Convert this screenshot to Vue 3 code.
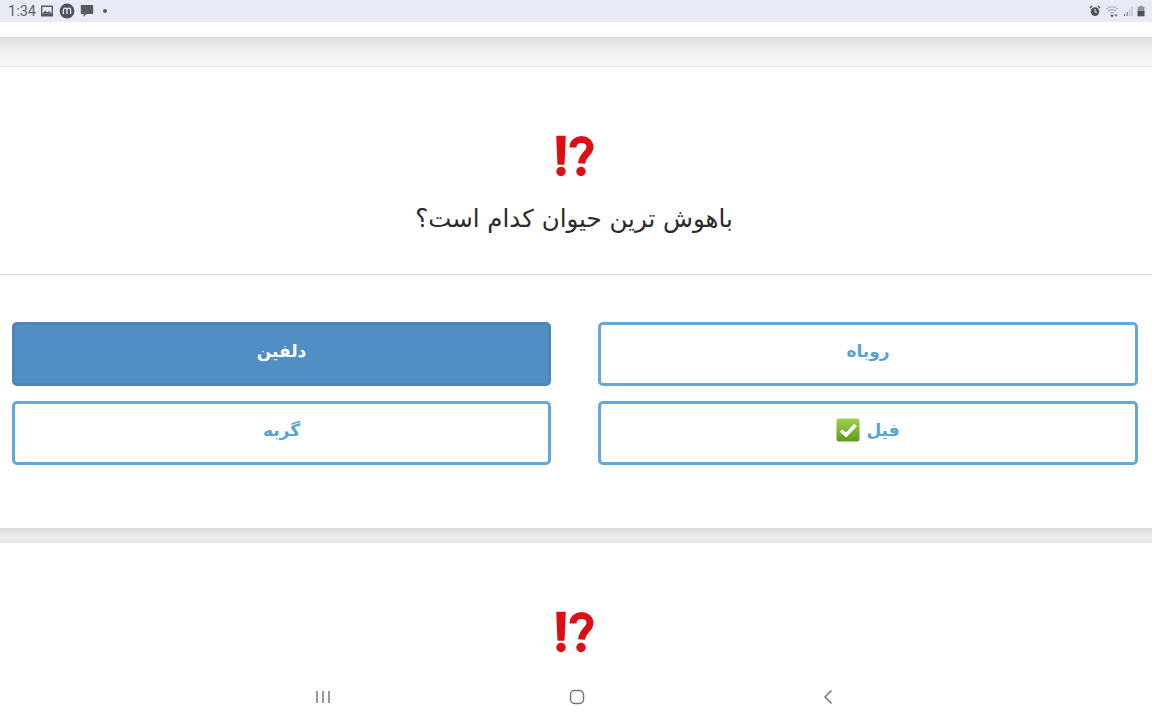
<script setup>
const answers = [
  { id: 1, label: 'روباه' },
  { id: 2, label: 'دلفین', selected: true },
  { id: 3, label: 'فیل', correct: true },
  { id: 4, label: 'گربه' }
]
</script>

<template>
  <div class="screen">
    <header class="status-bar">
      <div class="status-left">
        <span class="clock">1:34</span>
        <svg class="ico" width="14" height="14" viewBox="0 0 14 14">
          <path d="M1 1.5h12v11H1z" fill="#555a63" />
          <path d="M2.4 3h9.2v6.4H2.4z" fill="#e8ebf6" />
          <path d="M2.4 9.6l3-3.2 2 2 1.8-1.5 2.4 2.7z" fill="#555a63" />
        </svg>
        <svg class="ico" width="16" height="16" viewBox="0 0 16 16">
          <circle cx="8" cy="8" r="7.4" fill="#4f535b" />
          <path d="M4.4 11V6.9a1.7 1.7 0 0 1 3.6 0V11M8 6.9a1.7 1.7 0 0 1 3.6 0V11" fill="none" stroke="#e8ebf6" stroke-width="1.3" />
        </svg>
        <svg class="ico" width="14" height="14" viewBox="0 0 14 14">
          <path d="M.8 1h12.4v9H6.4L3.6 13v-3H.8z" fill="#555a63" />
        </svg>
        <span class="dot"></span>
      </div>
      <div class="status-right">
        <svg width="12" height="12" viewBox="0 0 12 12">
          <circle cx="6" cy="6.6" r="4.3" fill="#4f535b" />
          <path d="M1 3l2-2M11 3L9 1" stroke="#4f535b" stroke-width="1.4" />
          <path d="M6 4v3h2" stroke="#e8ebf6" fill="none" />
        </svg>
        <svg width="14" height="12" viewBox="0 0 14 12">
          <path d="M1 4.2a8.4 8.4 0 0 1 12 0M3 6.2a5.6 5.6 0 0 1 8 0M5 8.2a2.8 2.8 0 0 1 4 0" fill="none" stroke="#a4a8b0" stroke-width="1.1" />
          <path d="M6.2 10h1.6v1.4H6.2zM9.5 10.2h3M11 9v2.6" stroke="#5c6068" stroke-width=".8" />
        </svg>
        <svg width="10" height="12" viewBox="0 0 10 12">
          <path d="M1 9h1v2H1zM3.6 7h1v4h-1z" fill="#5c6068" />
          <path d="M6.2 4.500h1V11h-1zM8.600 2h1v9h-1z" fill="#b5b8bf" />
        </svg>
        <svg width="8" height="12" viewBox="0 0 8 12">
          <path d="M2.600 .8h2.800v1H7.400v9.400H.6V1.800h2z" fill="#8f939b" />
          <path d="M.6 6h6.800v5.200H.6z" fill="#4f535b" />
        </svg>
      </div>
    </header>

    <main class="feed">
      <div class="top-gap"></div>
      <div class="band first"></div>

      <section class="card" dir="rtl">
        <div class="question">
          <svg class="mark" width="42" height="44" viewBox="1.500 0 42 44">
            <path d="M3.500 1.500h8l-1.200 27.500H4.700z" fill="#dd0f14" stroke="#dd0f14" stroke-width="1.500" stroke-linejoin="round" />
            <circle cx="7.500" cy="36.500" r="4.700" fill="#dd0f14" />
            <path d="M19.500 12.500c0-5 4-8 8.500-8s8.500 3 8.500 7.500c0 6.500-7.800 7.500-8.500 16.500" fill="none" stroke="#dd0f14" stroke-width="7" />
            <circle cx="27.500" cy="36.500" r="4.700" fill="#dd0f14" />
          </svg>
          <h2 class="title">باهوش ترین حیوان کدام است؟</h2>
        </div>

        <div class="answers">
          <button
            v-for="a in answers"
            :key="a.id"
            class="answer"
            :class="{ selected: a.selected }"
            type="button"
          >
            <span>{{ a.label }}</span>
            <svg v-if="a.correct" class="check" width="24" height="24" viewBox="0 0 24 24">
              <defs>
                <linearGradient id="checkfill" x1="0" y1="0" x2="0" y2="1">
                  <stop offset="0" stop-color="#a5cf4e" />
                  <stop offset="1" stop-color="#5c9a1f" />
                </linearGradient>
              </defs>
              <rect x="0.500" y="0.500" width="23" height="23" rx="2.500" fill="url(#checkfill)" />
              <path d="M5 12.500l5 4.500 9.500-10" fill="none" stroke="#fff" stroke-width="3.600" />
            </svg>
          </button>
        </div>
      </section>

      <div class="band"></div>

      <section class="card next">
        <svg class="mark" width="42" height="44" viewBox="1.500 0 42 44">
          <path d="M3.500 1.500h8l-1.200 27.500H4.700z" fill="#dd0f14" stroke="#dd0f14" stroke-width="1.500" stroke-linejoin="round" />
          <circle cx="7.500" cy="36.500" r="4.700" fill="#dd0f14" />
          <path d="M19.500 12.500c0-5 4-8 8.500-8s8.500 3 8.500 7.500c0 6.500-7.800 7.500-8.500 16.500" fill="none" stroke="#dd0f14" stroke-width="7" />
          <circle cx="27.500" cy="36.500" r="4.700" fill="#dd0f14" />
        </svg>
      </section>
    </main>

    <nav class="nav-bar">
      <svg width="16" height="14" viewBox="0 0 16 14">
        <path d="M2 1v12M8 1v12M14 1v12" stroke="#777" stroke-width="1.500" />
      </svg>
      <svg width="16" height="16" viewBox="0 0 16 16">
        <rect x="1.500" y="1.500" width="13" height="13" rx="4" fill="none" stroke="#777" stroke-width="1.500" />
      </svg>
      <svg width="12" height="16" viewBox="0 0 12 16">
        <path d="M9.500 1.500L3 8l6.500 6.500" fill="none" stroke="#777" stroke-width="1.500" />
      </svg>
    </nav>
  </div>
</template>

<style>
body {
  background: #fff;
}
</style>

<style scoped>
.screen {
  width: 1152px;
  height: 720px;
  overflow: hidden;
  position: relative;
  background: #fff;
  font-family: "DejaVu Sans", "Noto Sans", sans-serif;
}
.status-bar {
  height: 22px;
  background: #e8ebf6;
  display: flex;
  justify-content: space-between;
  align-items: center;
  padding: 0 7px 0 8px;
}
.status-left {
  display: flex;
  align-items: center;
  gap: 5px;
}
.status-right {
  display: flex;
  align-items: center;
  gap: 4px;
}
.clock {
  font-family: Roboto, "Liberation Sans", sans-serif;
  font-size: 14.500px;
  color: #5c6068;
  margin-right: -1px;
}
.dot {
  width: 4px;
  height: 4px;
  border-radius: 50%;
  background: #555a63;
  margin-left: 4px;
}
.top-gap {
  height: 15px;
  background: #fff;
}
.band {
  height: 15px;
  background: linear-gradient(#dcdcdc, #ececec 50%, #e6e6e6);
  border-top: 1px solid #d9d9d9;
  box-sizing: border-box;
}
.band.first {
  height: 30px;
  background: linear-gradient(#dedede, #f0f0f0 40%, #f6f6f6);
  border-bottom: 1px solid #e4e4e4;
}
.card {
  background: #fff;
  height: 461px;
  box-sizing: border-box;
}
.question {
  height: 208px;
  box-sizing: border-box;
  border-bottom: 1px solid #ddd;
  padding-top: 68px;
  display: flex;
  flex-direction: column;
  align-items: center;
}
.mark {
  display: block;
  flex: none;
}
.title {
  margin: 24px 0 0;
  padding-right: 4px;
  font-size: 24.500px;
  line-height: 32px;
  font-weight: 400;
  color: #2b2b2b;
}
.answers {
  display: grid;
  grid-template-columns: 540px 539px;
  justify-content: space-between;
  grid-auto-rows: 64px;
  row-gap: 15px;
  padding: 47px 14px 0 12px;
}
.answer {
  display: flex;
  align-items: center;
  justify-content: center;
  gap: 6px;
  padding: 0 0 6px;
  background: #fff;
  border: 3px solid #62a8d8;
  border-radius: 5px;
  color: #58a3d6;
  font-family: inherit;
  font-size: 17px;
  font-weight: 700;
}
.answer.selected {
  background: #508ec4;
  border-color: #4d86b8;
  color: #fff;
}
.check {
  width: 24px;
  height: 24px;
}
.next {
  display: flex;
  justify-content: center;
  padding-top: 68px;
}
.nav-bar {
  position: absolute;
  left: 0;
  right: 0;
  bottom: 0;
  height: 46px;
  padding-left: 315px;
  padding-right: 318px;
  box-sizing: border-box;
  display: flex;
  align-items: center;
  justify-content: space-between;
}
</style>
